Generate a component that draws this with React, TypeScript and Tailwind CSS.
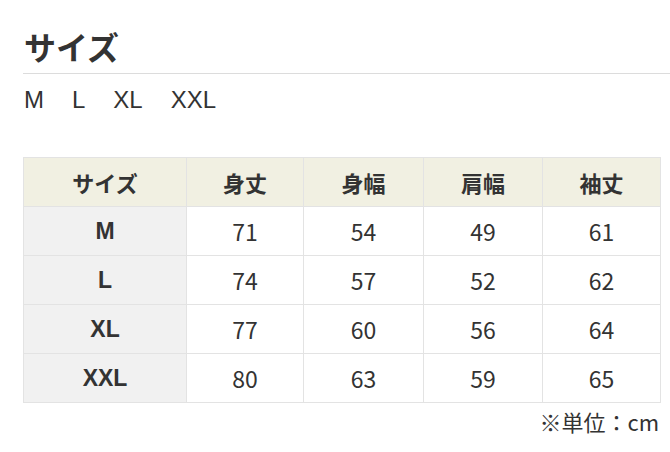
import type { FC } from "react";

const rows = [
    { size: "M", values: [71, 54, 49, 61] },
    { size: "L", values: [74, 57, 52, 62] },
    { size: "XL", values: [77, 60, 56, 64] },
    { size: "XXL", values: [80, 63, 59, 65] },
];

const headers = ["身丈", "身幅", "肩幅", "袖丈"];

const App: FC = () => {
    return (
        <div className="w-[670px] h-[452px] bg-white text-[#333] pl-[23px] pt-[25px] font-['Liberation_Sans','Noto_Sans_CJK_JP',sans-serif]">
            <h2 className="text-[32px] font-bold leading-[42px] pb-[6px] pl-[1px] border-b border-[#dcdcdc] font-['Noto_Sans_CJK_JP',sans-serif]">
                サイズ
            </h2>
            <div className="flex gap-[28px] mt-[10px] pl-[1px] text-[24px] leading-[32px]">
                <span>M</span>
                <span>L</span>
                <span>XL</span>
                <span>XXL</span>
            </div>

            <table className="mt-[41px] w-[637px] border-collapse text-center table-fixed">
                <colgroup>
                    <col className="w-[163px]" />
                    <col className="w-[117px]" />
                    <col className="w-[120px]" />
                    <col className="w-[119px]" />
                    <col className="w-[118px]" />
                </colgroup>
                <thead>
                    <tr className="bg-[#f1f0e2] h-[49px]">
                        <th className="border border-[#e3e3e3] text-[22px] font-bold font-['Noto_Sans_CJK_JP',sans-serif]">サイズ</th>
                        {headers.map((h) => (
                            <th key={h} className="border border-[#e3e3e3] text-[22px] font-bold font-['Noto_Sans_CJK_JP',sans-serif]">
                                {h}
                            </th>
                        ))}
                    </tr>
                </thead>
                <tbody>
                    {rows.map((r) => (
                        <tr key={r.size} className="h-[49px]">
                            <td className="border border-[#e3e3e3] bg-[#f1f1f1] text-[23px] font-bold">{r.size}</td>
                            {r.values.map((v, i) => (
                                <td key={i} className="border border-[#e3e3e3] text-[23px] font-['Noto_Sans_CJK_JP',sans-serif]">
                                    {v}
                                </td>
                            ))}
                        </tr>
                    ))}
                </tbody>
            </table>
            <p className="w-[636px] text-right text-[22px] leading-[30px] mt-[3px] font-['Noto_Sans_CJK_JP',sans-serif]">
                ※単位：cm
            </p>
        </div>
    );
};

export default App;
